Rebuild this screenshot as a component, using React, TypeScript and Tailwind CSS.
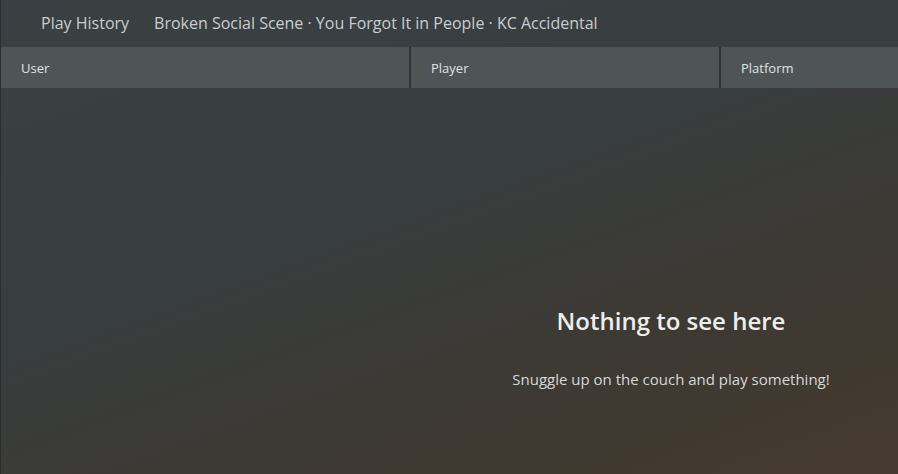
const columns = [
  { label: "User", width: "w-[408px]" },
  { label: "Player", width: "w-[310px]" },
  { label: "Platform", width: "flex-1" },
];

const App = () => {
  return (
    <div className="w-[898px] h-[474px] overflow-hidden flex flex-col border-l border-[#2a2e30] bg-[linear-gradient(160deg,#3a4143_0%,#383d3d_45%,#3e3932_75%,#453a2f_100%)] font-['Open_Sans',sans-serif]">
      <div className="h-[47px] flex items-center gap-[25px] pl-[40px] pb-[2px] text-[16px] text-[#c9cdcf] bg-[#394043]/70 shadow-[0_1px_3px_rgba(0,0,0,0.25)]">
        <span>Play History</span>
        <span>Broken Social Scene · You Forgot It in People · KC Accidental</span>
      </div>
      <div className="h-[41px] flex bg-[#4f5555] text-[13px] text-[#dfe2e2]">
        {columns.map((col, i) => (
          <div
            key={col.label}
            className={`${col.width} flex items-center pt-[2px] ${i > 0 ? "border-l-2 border-[#2f3435] pl-[20px]" : "pl-[20px]"}`}
          >
            {col.label}
          </div>
        ))}
      </div>
      <div className="flex-1 flex">
        <div className="w-[443px]" />
        <div className="flex-1 flex flex-col items-center pt-[217px]">
          <h2 className="text-[24px] font-semibold text-[#eceeee] leading-[32px]">Nothing to see here</h2>
          <p className="mt-[32px] text-[15px] text-[#d5d8d8] leading-[20px]">Snuggle up on the couch and play something!</p>
        </div>
      </div>
    </div>
  );
};

export default App;
